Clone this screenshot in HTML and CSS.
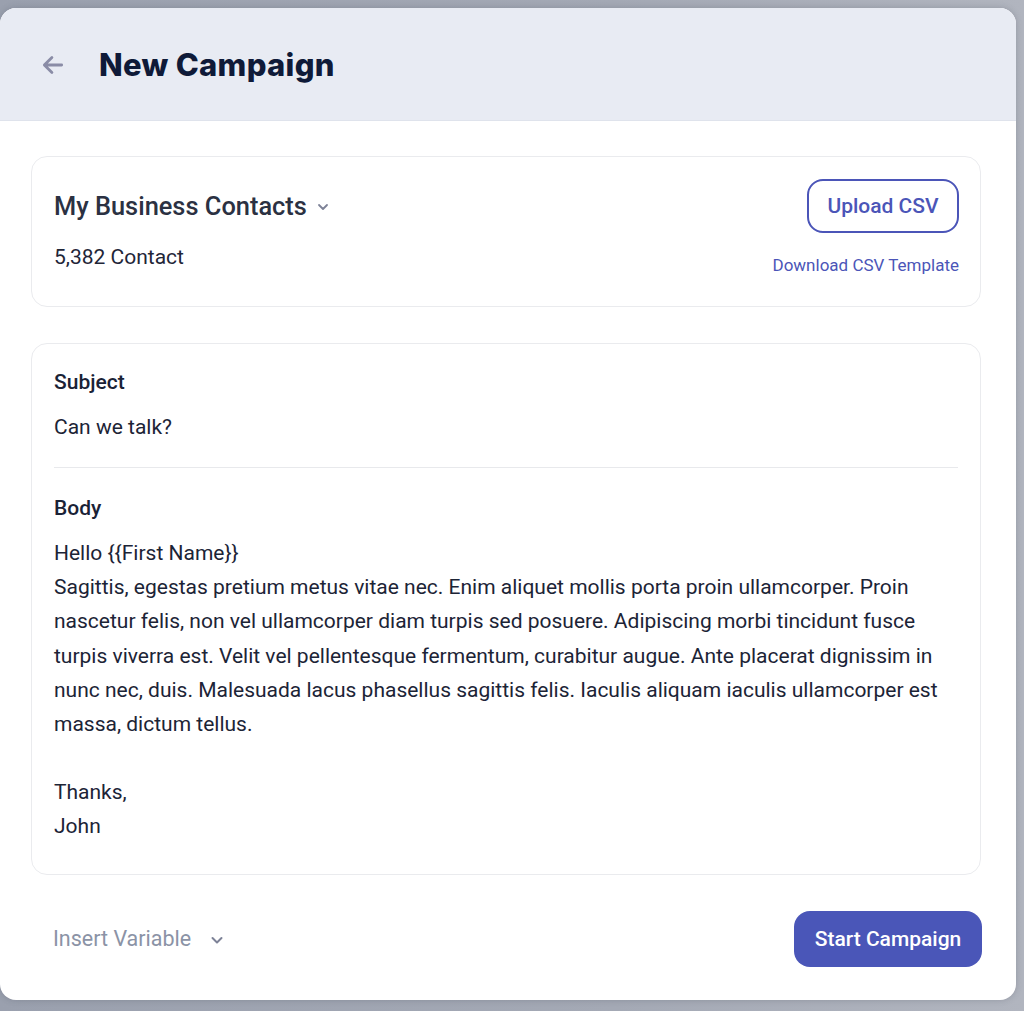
FILE: index.html
```html
<!DOCTYPE html>
<html>
<head>
<meta charset="utf-8">
<link rel="stylesheet" href="styles.css">
</head>
<body>
<div class="modal">
  <header class="modal-header">
    <svg class="back" width="26" height="26" viewBox="0 0 24 24" fill="none" stroke="#8a8ca6" stroke-width="2.6" stroke-linecap="round" stroke-linejoin="round"><path d="M20 12H4.5M11 5l-7 7 7 7"/></svg>
    <h1 class="title">New Campaign</h1>
  </header>
  <main class="modal-body">
    <section class="card contacts">
      <div class="contacts-left">
        <div class="list-name">My Business Contacts
          <svg class="chev-sm" width="14" height="14" viewBox="0 0 14 14" fill="none" stroke="#7d8297" stroke-width="1.8" stroke-linecap="round" stroke-linejoin="round"><path d="M3 5l4 4 4-4"/></svg>
        </div>
        <div class="count">5,382 Contact</div>
      </div>
      <div class="contacts-right">
        <button class="btn-outline">Upload CSV</button>
        <a class="link">Download CSV Template</a>
      </div>
    </section>
    <section class="card message">
      <div class="label">Subject</div>
      <div class="value subject-value">Can we talk?</div>
      <hr class="divider">
      <div class="label">Body</div>
      <div class="body-text">
        <p>Hello {{First Name}}<br>Sagittis, egestas pretium metus vitae nec. Enim aliquet mollis porta proin ullamcorper. Proin nascetur felis, non vel ullamcorper diam turpis sed posuere. Adipiscing morbi tincidunt fusce turpis viverra est. Velit vel pellentesque fermentum, curabitur augue. Ante placerat dignissim in nunc nec, duis. Malesuada lacus phasellus sagittis felis. Iaculis aliquam iaculis ullamcorper est massa, dictum tellus.</p>
        <p>Thanks,<br>John</p>
      </div>
    </section>
    <footer class="footer">
      <div class="insert">Insert Variable
        <svg class="chev" width="16" height="16" viewBox="0 0 16 16" fill="none" stroke="#7d8297" stroke-width="2" stroke-linecap="round" stroke-linejoin="round"><path d="M3.5 6l4.5 4.5L12.5 6"/></svg>
      </div>
      <button class="btn-primary">Start Campaign</button>
    </footer>
  </main>
</div>
</body>
</html>
```
FILE: styles.css
```css
* { box-sizing: border-box; }
html, body { margin: 0; padding: 0; }
body {
  width: 1024px;
  height: 1011px;
  overflow: hidden;
  background: linear-gradient(90deg, #9aa0ae 0%, #a4a9b5 60%, #b1b5bf 100%);
  font-family: Roboto, "Liberation Sans", sans-serif;
  color: #1c2436;
}
.modal {
  margin-top: 8px;
  width: 1016px;
  height: 992px;
  background: #fff;
  border-radius: 16px;
  overflow: hidden;
  display: flex;
  flex-direction: column;
  box-shadow: 0 0 6px rgba(60, 65, 80, 0.25);
}
.modal-header {
  height: 113px;
  flex: none;
  background: #e8ebf3;
  border-bottom: 1px solid #dfe3ec;
  display: flex;
  align-items: center;
  padding-left: 40px;
  gap: 33px;
}
.back { flex: none; margin-top: 1px; }
.title {
  margin: 0;
  font-family: Inter, "DejaVu Sans", sans-serif;
  font-weight: 800;
  font-size: 31px;
  letter-spacing: 0.3px;
  color: #0f1a38;
}
.modal-body {
  flex: 1;
  padding: 35px 35px 0 31px;
  display: flex;
  flex-direction: column;
}
.card {
  border: 1px solid #eaebee;
  border-radius: 16px;
  background: #fff;
}
.contacts {
  height: 151px;
  display: flex;
  justify-content: space-between;
  padding: 22px 21px 0 22px;
}
.contacts-left { padding-top: 12px; }
.list-name {
  font-size: 25.4px;
  font-weight: 500;
  color: #2b3142;
  line-height: 30px;
  display: flex;
  align-items: center;
  gap: 9px;
}
.chev-sm { margin-top: 2px; }
.count {
  margin-top: 22px;
  font-size: 21px;
  line-height: 28px;
  color: #1f2638;
}
.contacts-right {
  display: flex;
  flex-direction: column;
  align-items: flex-end;
}
.btn-outline {
  width: 152px;
  height: 54px;
  border: 2px solid #4b55b8;
  border-radius: 16px;
  background: #fff;
  color: #4b55b8;
  font-family: Roboto, "Liberation Sans", sans-serif;
  font-size: 21px;
  font-weight: 500;
  padding: 0;
}
.link {
  margin-top: 22px;
  font-size: 17px;
  line-height: 20px;
  color: #4b55b8;
}
.message {
  margin-top: 36px;
  height: 532px;
  padding: 23px 22px 0 22px;
}
.label {
  font-size: 21px;
  font-weight: 500;
  line-height: 30px;
  color: #1a2236;
}
.value {
  font-size: 21px;
  line-height: 30px;
  color: #1c2436;
}
.subject-value { margin-top: 15px; }
.divider {
  margin: 25px 0 25px 0;
  border: none;
  border-top: 1px solid #e8e9ec;
  height: 0;
}
.body-text {
  margin-top: 13px;
  font-size: 21px;
  line-height: 34.2px;
  color: #1c2436;
}
.body-text p { margin: 0 0 34px 0; }
.body-text p:last-child { margin-bottom: 0; }
.footer {
  flex: 1;
  display: flex;
  justify-content: space-between;
  align-items: center;
  padding: 2px 0 0 22px;
  margin-right: -1px;
}
.insert {
  font-size: 21.5px;
  color: #8b93a6;
  display: flex;
  align-items: center;
  gap: 18px;
}
.chev { margin-top: 2px; }
.btn-primary {
  width: 188px;
  height: 56px;
  border: none;
  border-radius: 16px;
  background: #4a56b8;
  color: #fff;
  font-family: Roboto, "Liberation Sans", sans-serif;
  font-size: 21px;
  font-weight: 500;
  padding: 0;
}
```
